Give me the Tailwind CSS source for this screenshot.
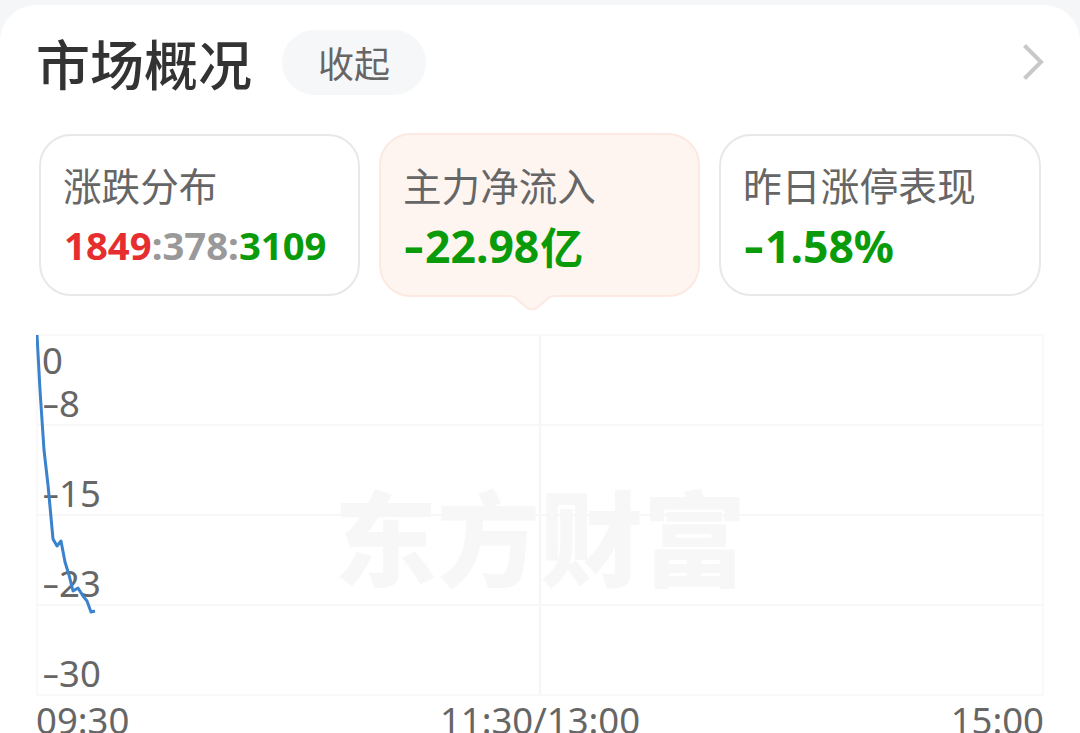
<!DOCTYPE html>
<html lang="zh-CN">
<head>
  <meta charset="UTF-8">
  <meta name="viewport" content="width=device-width, initial-scale=1.0">
  <title>市场概况</title>
  <script src="https://cdn.jsdelivr.net/npm/@tailwindcss/browser@4"></script>
</head>
<body class="h-screen overflow-hidden bg-[#f5f6f8] pt-[5px] font-['Noto_Sans','Noto_Sans_CJK_SC',sans-serif] text-[#666]">
  <main class="h-[760px] rounded-t-[36px] bg-white px-9 pt-[25px]">

    <!-- Header -->
    <header class="flex h-[65px] items-center">
      <h1 class="font-['Noto_Sans_CJK_SC',sans-serif] text-[54px] leading-[64px] font-medium text-[#333]">市场概况</h1>
      <button class="ml-[30px] h-[65px] w-36 rounded-full bg-[#f6f7f9] pb-[2px] font-['Noto_Sans_CJK_SC',sans-serif] text-[36px] leading-[62px]">收起</button>
      <svg class="mb-[2px] ml-auto h-10 w-6" viewBox="0 0 24 40" fill="none" stroke="#c8c8c8" stroke-width="4">
        <path d="M4.500 3.500 L21 20 L4.500 36.500" />
      </svg>
    </header>

    <!-- Cards -->
    <section class="mt-[38px] flex gap-[19px] pl-[3px]">
      <div class="mt-px h-[162px] w-[321px] rounded-[32px] border-2 border-[#e8e8e8] pt-[24px] pl-[22px]">
        <p class="font-['Noto_Sans_CJK_SC',sans-serif] text-[38.6px] leading-[48px]">涨跌分布</p>
        <p class="mt-[11px] pl-px text-[38.3px] leading-[52px] font-bold text-[#999]"><span class="text-[#e62e2e]">1849</span>:378:<span class="text-[#0a9b0a]">3109</span></p>
      </div>
      <div class="relative h-[164px] w-[321px] rounded-[32px] border-2 border-[#fbe9e2] bg-[#fef5f0] pt-[25px] pl-[22px]">
        <p class="font-['Noto_Sans_CJK_SC',sans-serif] text-[38.6px] leading-[48px]">主力净流入</p>
        <p class="mt-[12px] flex pl-px text-[44.5px] leading-[52px] font-bold text-[#0a9b0a]"><span class="w-[21px] origin-left -translate-y-px scale-x-140">-</span>22.98<span class="-mt-px ml-px font-['Noto_Sans_CJK_SC',sans-serif] text-[43px]">亿</span></p>
        <svg class="absolute top-[160px] left-[129px] h-4 w-[44px]" viewBox="0 0 44 16" fill="#fef5f0">
          <path d="M0 0 H44 V1 Q39 1 35 5 L27 12 Q22 16 17 12 L9 5 Q5 1 0 1 Z" />
          <path d="M0 1 Q4 1 8 5 L17 13 Q22 16 27 13 L36 5 Q40 1 44 1" stroke="#fbe9e2" stroke-width="2" />
        </svg>
      </div>
      <div class="mt-px h-[162px] w-[322px] rounded-[32px] border-2 border-[#e8e8e8] pt-[24px] pl-[22px]">
        <p class="font-['Noto_Sans_CJK_SC',sans-serif] text-[38.8px] leading-[48px]">昨日涨停表现</p>
        <p class="mt-[12px] flex pl-px text-[44.5px] leading-[52px] font-bold text-[#0a9b0a]"><span class="w-[21px] origin-left -translate-y-px scale-x-140">-</span>1.58%</p>
      </div>
    </section>

    <!-- Chart -->
    <section class="relative mt-[37px] h-[362px] w-[1008px] border-2 border-[#f9f9f9] text-[36.5px] leading-[38px]">
      <div class="absolute inset-0 flex items-center justify-center pt-[40px] font-['Noto_Sans_CJK_SC',sans-serif] text-[103px] leading-[120px] font-black text-[#f7f7f7]">东方财富</div>
      <div class="absolute inset-y-0 left-[501px] w-[2px] bg-[#f5f5f5]"></div>
      <div class="relative grid h-full grid-rows-[90px_90px_90px_88px]">
        <div class="flex flex-col justify-between border-b-2 border-[#f7f7f7] pb-[2px] pl-1">
          <span class="mt-[5px]">0</span>
          <span class="flex"><span class="w-[17px] origin-left -translate-y-px scale-x-150">-</span>8</span>
        </div>
        <div class="flex items-end border-b-2 border-[#f7f7f7] pb-[2px] pl-1"><span class="w-[17px] origin-left -translate-y-px scale-x-150">-</span>15</div>
        <div class="flex items-end border-b-2 border-[#f7f7f7] pb-[2px] pl-1"><span class="w-[17px] origin-left -translate-y-px scale-x-150">-</span>23</div>
        <div class="flex items-end pb-[2px] pl-1"><span class="w-[17px] origin-left -translate-y-px scale-x-150">-</span>30</div>
      </div>
      <svg class="absolute -top-[2px] -left-[2px] h-[362px] w-[70px]" viewBox="0 0 70 362" fill="none" stroke="#3a82cc" stroke-width="3" stroke-linejoin="round">
        <path d="M1 1 L4 56 L8 116 L12 151 L17 205 L21 212 L25 207 L29 228 L33 241 L37 257 L42 254 L47 262 L51 267 L55 278 L59 277" />
      </svg>
    </section>

    <!-- Time axis -->
    <div class="mt-[3px] flex justify-between text-[36.5px] leading-[42px]">
      <span>09:30</span>
      <span>11:30/13:00</span>
      <span>15:00</span>
    </div>
  </main>
</body>
</html>
